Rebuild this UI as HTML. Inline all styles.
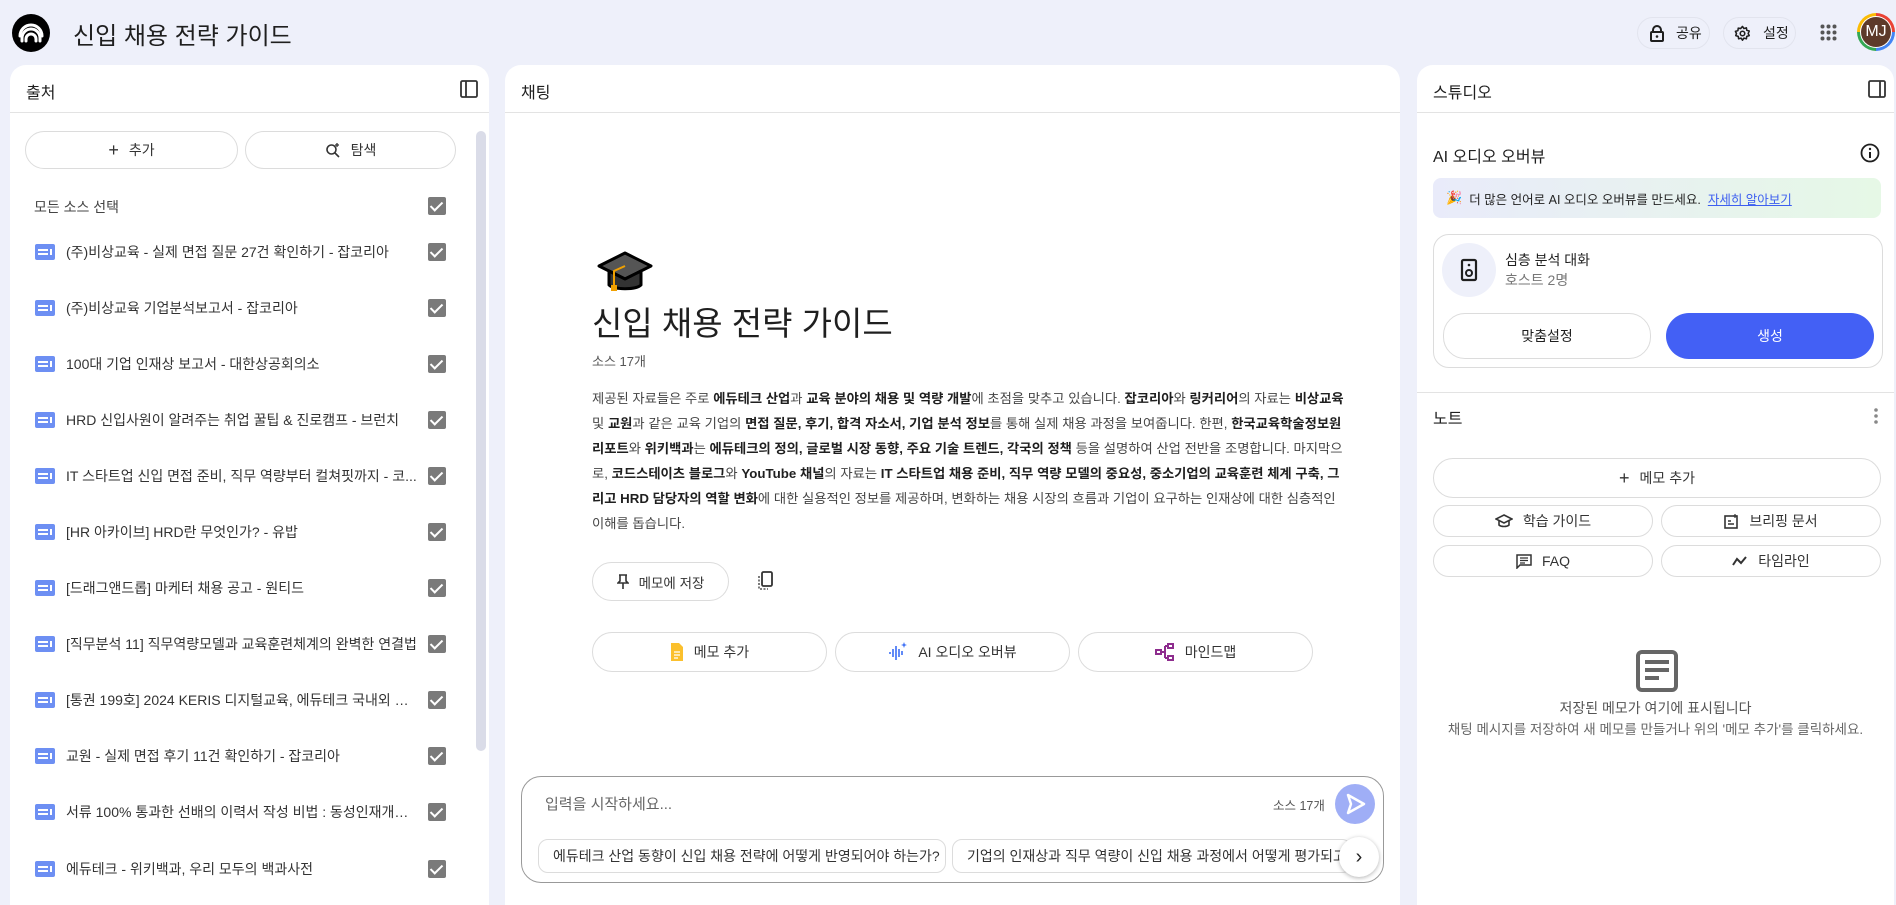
<!DOCTYPE html>
<html><head><meta charset="utf-8">
<style>
*{box-sizing:border-box;margin:0;padding:0}
body{width:1896px;height:890px;overflow:hidden;background:#eef0fa;font-family:"Liberation Sans","Noto Sans CJK KR",sans-serif;color:#1f1f1f;position:relative}
.a{position:absolute}
.panel{position:absolute;background:#fff;border-radius:16px 16px 0 0;top:65px;height:840px;overflow:hidden}
.ph{position:absolute;left:0;right:0;top:0;height:48px;border-bottom:1px solid #e3e3e3}
.pt{position:absolute;left:16px;top:14px;font-size:16px;color:#1f1f1f}
.btn{position:absolute;border:1px solid #dcdcdc;border-radius:22px;background:#fff;display:flex;align-items:center;justify-content:center;font-size:14px;color:#333;gap:10px}
.item{position:absolute;left:25px;width:420px;height:24px;display:flex;align-items:center;font-size:14px;color:#333}
.item .t{width:352px;white-space:nowrap;overflow:hidden;text-overflow:ellipsis}
.ic{width:20px;height:16px;background:#6d8ff3;border-radius:2px;position:relative;margin-right:11px;flex:none}
.ic:before{content:"";position:absolute;left:3px;top:5px;width:10px;height:2px;background:#fff;box-shadow:0 4px 0 #fff}
.ic:after{content:"";position:absolute;left:15px;top:5px;width:2px;height:6px;background:#fff}
.cb{position:absolute;left:393px;top:3px;width:18px;height:18px;background:#7a7a7a;border-radius:2px}
.cb:after{content:"";position:absolute;left:5px;top:2px;width:5px;height:10px;border:solid #fff;border-width:0 2px 2px 0;transform:rotate(45deg)}
.p{font-size:13.3px;line-height:24.9px;color:#444;white-space:nowrap}
.p b{color:#1f1f1f}
.chip{position:absolute;top:774px;height:34px;border:1px solid #dcdcdc;border-radius:10px;font-size:14px;color:#333;display:flex;align-items:center;padding-left:14px;white-space:nowrap;overflow:hidden;background:#fff}
</style></head><body>

<div class="a" style="left:12px;top:14px;width:38px;height:38px;border-radius:50%;background:#000">
<svg width="38" height="38" viewBox="0 0 38 38"><g fill="none" stroke="#fff" stroke-width="3" stroke-linecap="round"><path d="M10 27v-3a9 9 0 0 1 18 0v3"/><path d="M14 27v-2a5 5 0 0 1 10 0v2"/><path d="M8 22a11 11 0 0 1 22 0"/></g></svg>
</div>
<div class="a" style="left:73px;top:16px;font-size:24px;color:#1f1f1f">신입 채용 전략 가이드</div>

<div class="a" style="left:1637px;top:17px;width:73px;height:32px;border:1px solid #e2e4ee;border-radius:16px;font-size:14px;display:flex;align-items:center;padding-left:12px;gap:12px">
<svg width="14" height="17" viewBox="0 0 14 17"><path d="M3 7V5a4 4 0 0 1 8 0v2" fill="none" stroke="#1f1f1f" stroke-width="2"/><rect x="1" y="7" width="12" height="9" rx="1" fill="none" stroke="#1f1f1f" stroke-width="2"/><circle cx="7" cy="11.5" r="1.3" fill="#1f1f1f"/></svg>공유</div>
<div class="a" style="left:1723px;top:17px;width:73px;height:32px;border:1px solid #e2e4ee;border-radius:16px;font-size:14px;display:flex;align-items:center;padding-left:10px;gap:12px">
<svg width="17" height="17" viewBox="0 0 24 24"><path d="M12 2l2 3 3.5-1 .5 3.5 3.5 1-1.5 3.5 1.5 3-3.5 1-.5 3.5-3.5-1-2 3-2-3-3.5 1-.5-3.5-3.5-1L3.5 12 2 9l3.5-1L6 4.5 9.5 5z" fill="none" stroke="#1f1f1f" stroke-width="2.2" stroke-linejoin="round"/><circle cx="12" cy="12" r="3.2" fill="none" stroke="#1f1f1f" stroke-width="2.2"/></svg>설정</div>
<svg class="a" style="left:1820px;top:24px" width="17" height="17" viewBox="0 0 17 17"><g fill="#555"><circle cx="2.5" cy="2.5" r="2"/><circle cx="8.5" cy="2.5" r="2"/><circle cx="14.5" cy="2.5" r="2"/><circle cx="2.5" cy="8.5" r="2"/><circle cx="8.5" cy="8.5" r="2"/><circle cx="14.5" cy="8.5" r="2"/><circle cx="2.5" cy="14.5" r="2"/><circle cx="8.5" cy="14.5" r="2"/><circle cx="14.5" cy="14.5" r="2"/></g></svg>
<div class="a" style="left:1857px;top:13px;width:38px;height:38px;border-radius:50%;background:conic-gradient(#ea4335 0 25%,#4285f4 25% 50%,#34a853 50% 75%,#fbbc05 75%);"></div>
<div class="a" style="left:1860px;top:16px;width:32px;height:32px;border-radius:50%;background:#fff"></div>
<div class="a" style="left:1861px;top:17px;width:30px;height:30px;border-radius:50%;background:#5d3a2a;color:#fff;font-size:16px;display:flex;align-items:center;justify-content:center">MJ</div>

<div class="panel" style="left:10px;width:479px">
<div class="ph"><div class="pt">출처</div>
<svg class="a" style="left:450px;top:15px" width="18" height="18" viewBox="0 0 18 18"><rect x="1" y="1" width="16" height="16" rx="1.5" fill="none" stroke="#333" stroke-width="1.8"/><path d="M6 1v16" stroke="#333" stroke-width="1.8"/></svg></div>
<div class="btn" style="left:15px;top:66px;width:213px;height:38px"><span style="font-size:18px">+</span>추가</div>
<div class="btn" style="left:235px;top:66px;width:211px;height:38px"><svg width="16" height="16" viewBox="0 0 16 16"><circle cx="6.5" cy="7.5" r="4.5" fill="none" stroke="#333" stroke-width="1.6"/><path d="M10 11l4 4" stroke="#333" stroke-width="1.6"/><path d="M12 1v4M10 3h4" stroke="#333" stroke-width="1.3"/></svg>탐색</div>
<div class="a" style="left:24px;top:132px;font-size:14px;color:#444">모든 소스 선택</div>
<div class="cb" style="left:418px;top:132px"></div>
<div class="a" style="left:0;top:-65px">
<div class="item" style="top:240px"><span class="ic"></span><span class="t">(주)비상교육 - 실제 면접 질문 27건 확인하기 - 잡코리아</span><span class="cb"></span></div>
<div class="item" style="top:296px"><span class="ic"></span><span class="t">(주)비상교육 기업분석보고서 - 잡코리아</span><span class="cb"></span></div>
<div class="item" style="top:352px"><span class="ic"></span><span class="t">100대 기업 인재상 보고서 - 대한상공회의소</span><span class="cb"></span></div>
<div class="item" style="top:408px"><span class="ic"></span><span class="t">HRD 신입사원이 알려주는 취업 꿀팁 &amp; 진로캠프 - 브런치</span><span class="cb"></span></div>
<div class="item" style="top:464px"><span class="ic"></span><span class="t">IT 스타트업 신입 면접 준비, 직무 역량부터 컬쳐핏까지 - 코...</span><span class="cb"></span></div>
<div class="item" style="top:520px"><span class="ic"></span><span class="t">[HR 아카이브] HRD란 무엇인가? - 유밥</span><span class="cb"></span></div>
<div class="item" style="top:576px"><span class="ic"></span><span class="t">[드래그앤드롭] 마케터 채용 공고 - 원티드</span><span class="cb"></span></div>
<div class="item" style="top:632px"><span class="ic"></span><span class="t">[직무분석 11] 직무역량모델과 교육훈련체계의 완벽한 연결법</span><span class="cb"></span></div>
<div class="item" style="top:688px"><span class="ic"></span><span class="t">[통권 199호] 2024 KERIS 디지털교육, 에듀테크 국내외 동...</span><span class="cb"></span></div>
<div class="item" style="top:744px"><span class="ic"></span><span class="t">교원 - 실제 면접 후기 11건 확인하기 - 잡코리아</span><span class="cb"></span></div>
<div class="item" style="top:800px"><span class="ic"></span><span class="t">서류 100% 통과한 선배의 이력서 작성 비법 : 동성인재개발...</span><span class="cb"></span></div>
<div class="item" style="top:857px"><span class="ic"></span><span class="t">에듀테크 - 위키백과, 우리 모두의 백과사전</span><span class="cb"></span></div>
</div>
<div class="a" style="left:466px;top:66px;width:10px;height:620px;background:#dadce8;border-radius:5px"></div>
</div>

<div class="panel" style="left:505px;width:895px">
<div class="ph"><div class="pt">채팅</div></div>
<svg class="a" style="left:92px;top:186px" width="56" height="42" viewBox="0 0 56 42"><path d="M28 2L54 15 28 28 2 15z" fill="#555" stroke="#000" stroke-width="3" stroke-linejoin="round"/><path d="M12 20v14c5 5 27 5 32 0V20L28 28z" fill="#333" stroke="#000" stroke-width="3" stroke-linejoin="round"/><path d="M28 15L17 20v16" stroke="#f0a000" stroke-width="2" fill="none"/><rect x="14" y="34" width="6" height="6" fill="#f0a000"/></svg>
<div class="a" style="left:87px;top:232px;font-size:33px;color:#1f1f1f">신입 채용 전략 가이드</div>
<div class="a" style="left:87px;top:286px;font-size:13px;color:#555">소스 17개</div>
<div class="a p" style="left:87px;top:322px">
제공된 자료들은 주로 <b>에듀테크 산업</b>과 <b>교육 분야의 채용 및 역량 개발</b>에 초점을 맞추고 있습니다. <b>잡코리아</b>와 <b>링커리어</b>의 자료는 <b>비상교육</b><br>
및 <b>교원</b>과 같은 교육 기업의 <b>면접 질문, 후기, 합격 자소서, 기업 분석 정보</b>를 통해 실제 채용 과정을 보여줍니다. 한편, <b>한국교육학술정보원</b><br>
<b>리포트</b>와 <b>위키백과</b>는 <b>에듀테크의 정의, 글로벌 시장 동향, 주요 기술 트렌드, 각국의 정책</b> 등을 설명하여 산업 전반을 조명합니다. 마지막으<br>
로, <b>코드스테이츠 블로그</b>와 <b>YouTube 채널</b>의 자료는 <b>IT 스타트업 채용 준비, 직무 역량 모델의 중요성, 중소기업의 교육훈련 체계 구축, 그</b><br>
<b>리고 HRD 담당자의 역할 변화</b>에 대한 실용적인 정보를 제공하며, 변화하는 채용 시장의 흐름과 기업이 요구하는 인재상에 대한 심층적인<br>
이해를 돕습니다.</div>
<div class="btn" style="left:87px;top:497px;width:137px;height:39px;font-size:13.5px"><svg width="12" height="16" viewBox="0 0 12 16"><path d="M2 1h8M3 1v6L1 9h10L9 7V1M6 9v6" fill="none" stroke="#333" stroke-width="1.6"/></svg>메모에 저장</div>
<svg class="a" style="left:253px;top:506px" width="16" height="20" viewBox="0 0 16 20"><rect x="4" y="1" width="10" height="14" rx="1.5" fill="none" stroke="#333" stroke-width="1.8"/><path d="M1 5v13h9" fill="none" stroke="#333" stroke-width="1.3" stroke-dasharray="2 1.5"/></svg>
<div class="btn" style="left:87px;top:567px;width:235px;height:40px"><svg width="14" height="20" viewBox="0 0 14 20"><path d="M1 1h8l4 4v14H1z" fill="#fbc02d"/><path d="M4 10h6M4 13h6M4 16h4" stroke="#fff" stroke-width="1.3"/></svg>메모 추가</div>
<div class="btn" style="left:330px;top:567px;width:235px;height:40px"><svg width="20" height="22" viewBox="0 0 20 22"><path d="M2 11v2M5 8v8M8 5v14M11 8v8M14 10v4" stroke="#3b6ef5" stroke-width="1.6"/><path d="M16 1l.8 2.2L19 4l-2.2.8L16 7l-.8-2.2L13 4l2.2-.8z" fill="#3b6ef5"/></svg>AI 오디오 오버뷰</div>
<div class="btn" style="left:573px;top:567px;width:235px;height:40px"><svg width="20" height="18" viewBox="0 0 20 18"><g fill="none" stroke="#8e2d8e" stroke-width="2"><rect x="1" y="7" width="5" height="4"/><rect x="13" y="1" width="5" height="4"/><rect x="13" y="13" width="5" height="4"/><path d="M6 9h4M10 3v12M10 3h3M10 15h3"/></g></svg>마인드맵</div>
<div class="a" style="left:16px;top:711px;width:863px;height:107px;border:1px solid #999;border-radius:20px"></div>
<div class="a" style="left:40px;top:728px;font-size:15px;color:#666">입력을 시작하세요...</div>
<div class="a" style="left:768px;top:730px;font-size:12.5px;color:#555">소스 17개</div>
<div class="a" style="left:830px;top:719px;width:40px;height:40px;border-radius:50%;background:#9faef6"><svg width="40" height="40" viewBox="0 0 40 40"><path d="M13 11l16 9-16 9 3-9z" fill="none" stroke="#fff" stroke-width="2.5" stroke-linejoin="round"/></svg></div>
<div class="chip" style="left:33px;width:408px">에듀테크 산업 동향이 신입 채용 전략에 어떻게 반영되어야 하는가?</div>
<div class="chip" style="left:447px;width:400px">기업의 인재상과 직무 역량이 신입 채용 과정에서 어떻게 평가되고</div>
<div class="a" style="left:834px;top:772px;width:40px;height:40px;border-radius:50%;background:#fff;box-shadow:0 1px 4px rgba(0,0,0,.3);font-size:20px;display:flex;align-items:center;justify-content:center;color:#222">›</div>
</div>

<div class="panel" style="left:1417px;width:477px">
<div class="ph"><div class="pt">스튜디오</div>
<svg class="a" style="left:451px;top:15px" width="18" height="18" viewBox="0 0 18 18"><rect x="1" y="1" width="16" height="16" rx="1.5" fill="none" stroke="#333" stroke-width="1.8"/><path d="M12 1v16" stroke="#333" stroke-width="1.8"/></svg></div>
<div class="a" style="left:16px;top:78px;font-size:16px">AI 오디오 오버뷰</div>
<svg class="a" style="left:443px;top:78px" width="20" height="20" viewBox="0 0 20 20"><circle cx="10" cy="10" r="8.5" fill="none" stroke="#1f1f1f" stroke-width="1.8"/><path d="M10 9v6" stroke="#1f1f1f" stroke-width="2"/><circle cx="10" cy="6" r="1.2" fill="#1f1f1f"/></svg>
<div class="a" style="left:16px;top:113px;width:448px;height:40px;border-radius:8px;background:linear-gradient(90deg,#e9ebfa,#e6f8e6);font-size:12.5px;display:flex;align-items:center;padding-left:13px;gap:7px;color:#222"><span style="font-size:13px">🎉</span>더 많은 언어로 AI 오디오 오버뷰를 만드세요.<span style="color:#3c5ef0;text-decoration:underline">자세히 알아보기</span></div>
<div class="a" style="left:16px;top:169px;width:450px;height:134px;border:1px solid #dcdcdc;border-radius:16px"></div>
<div class="a" style="left:25px;top:178px;width:54px;height:54px;border-radius:50%;background:#eef0fa"><svg width="54" height="54" viewBox="0 0 54 54"><rect x="20" y="17" width="14" height="20" rx="1.5" fill="none" stroke="#1f1f1f" stroke-width="2.2"/><circle cx="27" cy="30" r="3" fill="none" stroke="#1f1f1f" stroke-width="2"/><circle cx="27" cy="22" r="1.3" fill="#1f1f1f"/></svg></div>
<div class="a" style="left:88px;top:185px;font-size:14px;color:#1f1f1f">심층 분석 대화</div>
<div class="a" style="left:88px;top:205px;font-size:14px;color:#777">호스트 2명</div>
<div class="btn" style="left:26px;top:248px;width:208px;height:46px;font-size:14px;color:#1f1f1f">맞춤설정</div>
<div class="a" style="left:249px;top:248px;width:208px;height:46px;border-radius:23px;background:#4360f5;color:#fff;font-size:14px;display:flex;align-items:center;justify-content:center">생성</div>
<div class="a" style="left:0;top:327px;width:477px;height:1px;background:#e3e3e3"></div>
<div class="a" style="left:16px;top:340px;font-size:16px">노트</div>
<svg class="a" style="left:456px;top:342px" width="6" height="18" viewBox="0 0 6 18"><g fill="#888"><circle cx="3" cy="3" r="1.8"/><circle cx="3" cy="9" r="1.8"/><circle cx="3" cy="15" r="1.8"/></g></svg>
<div class="btn" style="left:16px;top:393px;width:448px;height:40px;font-size:14px"><span style="font-size:18px">+</span>메모 추가</div>
<div class="btn" style="left:16px;top:440px;width:220px;height:32px;font-size:14px"><svg width="18" height="14" viewBox="0 0 18 14"><path d="M9 1L17 5 9 9 1 5z" fill="none" stroke="#333" stroke-width="1.6"/><path d="M4 7v4c2 2 8 2 10 0V7" fill="none" stroke="#333" stroke-width="1.6"/></svg>학습 가이드</div>
<div class="btn" style="left:244px;top:440px;width:220px;height:32px;font-size:14px"><svg width="15" height="15" viewBox="0 0 15 15"><rect x="1" y="2" width="12" height="12" fill="none" stroke="#333" stroke-width="1.6"/><path d="M4 7h3M4 10h6" stroke="#333" stroke-width="1.4"/><path d="M11 0v4M9 2h4" stroke="#333" stroke-width="1.2"/></svg>브리핑 문서</div>
<div class="btn" style="left:16px;top:480px;width:220px;height:32px;font-size:14px"><svg width="16" height="15" viewBox="0 0 16 15"><path d="M1 1h14v10H4l-3 3z" fill="none" stroke="#333" stroke-width="1.5"/><path d="M4 4h8M4 6.5h8M4 9h5" stroke="#333" stroke-width="1.2"/></svg>FAQ</div>
<div class="btn" style="left:244px;top:480px;width:220px;height:32px;font-size:14px"><svg width="16" height="10" viewBox="0 0 16 10"><path d="M1 9l4-6 4 4 5-6" fill="none" stroke="#333" stroke-width="2"/></svg>타임라인</div>
<svg class="a" style="left:219px;top:585px" width="42" height="42" viewBox="0 0 42 42"><rect x="2" y="2" width="38" height="38" rx="4" fill="none" stroke="#666" stroke-width="4"/><path d="M9 12h24M9 20h24M9 28h14" stroke="#666" stroke-width="4"/></svg>
<div class="a" style="left:0;width:477px;top:633px;font-size:14px;color:#555;text-align:center">저장된 메모가 여기에 표시됩니다</div>
<div class="a" style="left:0;width:477px;top:653px;font-size:13.5px;color:#666;text-align:center">채팅 메시지를 저장하여 새 메모를 만들거나 위의 '메모 추가'를 클릭하세요.</div>
</div>
</body></html>
